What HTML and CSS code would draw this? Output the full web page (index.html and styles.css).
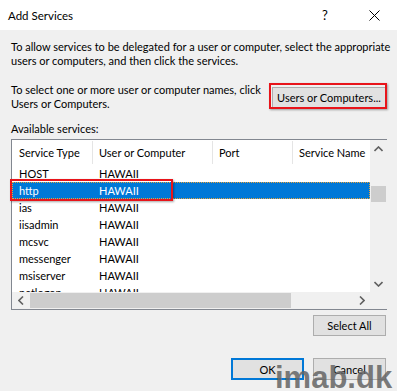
FILE: index.html
```html
<!DOCTYPE html>
<html lang="en">
<head>
<meta charset="UTF-8" />
<meta name="viewport" content="width=device-width, initial-scale=1" />
<title>Add Services</title>
<link rel="stylesheet" href="styles.css">
</head>
<body>

<div class="dialog">
  <div class="titleBar">
    <span class="titleText">Add Services</span>
    <span class="helpBtn">?</span>
    <span class="closeBtn">
      <svg width="11" height="11" viewBox="0 0 11 11"><path d="M0.5 0.5 L10.5 10.5 M10.5 0.5 L0.5 10.5" stroke="#000" stroke-width="1" fill="none"/></svg>
    </span>
  </div>

  <div class="dlgBody">
    <p class="introText">To allow services to be delegated for a user or computer, select the appropriate<br>users or computers, and then click the services.</p>

    <div class="pickRow">
      <p class="pickText">To select one or more user or computer names, click<br>Users or Computers.</p>
      <button class="winBtn usersBtn">Users or Computers...</button>
    </div>

    <div class="listLabel">Available services:</div>

    <div class="listBox">
      <div class="listView">
        <div class="listHead">
          <div class="col first">Service Type</div>
          <div class="col">User or Computer</div>
          <div class="col">Port</div>
          <div class="col">Service Name</div>
        </div>
        <div class="listRow"><div class="col first">HOST</div><div class="col">HAWAII</div><div class="col"></div><div class="col"></div></div>
        <div class="listRow selected"><div class="col first">http</div><div class="col">HAWAII</div><div class="col"></div><div class="col"></div></div>
        <div class="listRow"><div class="col first">ias</div><div class="col">HAWAII</div><div class="col"></div><div class="col"></div></div>
        <div class="listRow"><div class="col first">iisadmin</div><div class="col">HAWAII</div><div class="col"></div><div class="col"></div></div>
        <div class="listRow"><div class="col first">mcsvc</div><div class="col">HAWAII</div><div class="col"></div><div class="col"></div></div>
        <div class="listRow"><div class="col first">messenger</div><div class="col">HAWAII</div><div class="col"></div><div class="col"></div></div>
        <div class="listRow"><div class="col first">msiserver</div><div class="col">HAWAII</div><div class="col"></div><div class="col"></div></div>
        <div class="listRow"><div class="col first">netlogon</div><div class="col">HAWAII</div><div class="col"></div><div class="col"></div></div>
      </div>

      <div class="vScroll">
        <div class="arrowBox">
          <svg width="9" height="6" viewBox="0 0 9 6"><path d="M0.5 5 L4.5 1 L8.5 5" stroke="#606060" stroke-width="1.6" fill="none"/></svg>
        </div>
        <div class="vTrack"><div class="vThumb"></div></div>
        <div class="arrowBox">
          <svg width="9" height="6" viewBox="0 0 9 6"><path d="M0.5 1 L4.5 5 L8.5 1" stroke="#606060" stroke-width="1.6" fill="none"/></svg>
        </div>
      </div>

      <div class="hScroll">
        <div class="arrowBox">
          <svg width="6" height="9" viewBox="0 0 6 9"><path d="M5 0.5 L1 4.5 L5 8.5" stroke="#606060" stroke-width="1.6" fill="none"/></svg>
        </div>
        <div class="hTrack"><div class="hThumb"></div></div>
        <div class="arrowBox">
          <svg width="6" height="9" viewBox="0 0 6 9"><path d="M1 0.5 L5 4.5 L1 8.5" stroke="#606060" stroke-width="1.6" fill="none"/></svg>
        </div>
      </div>

      <div class="scrollCorner"></div>
    </div>

    <div class="selectRow">
      <button class="winBtn">Select All</button>
    </div>

    <div class="footerRow">
      <button class="winBtn defaultBtn">OK</button>
      <button class="winBtn">Cancel</button>
    </div>
  </div>

  <!-- red annotation boxes from the screenshot -->
  <div class="markBox markUsers"></div>
  <div class="markBox markHttp"></div>

  <div class="waterMark">imab.dk</div>
</div>

</body>
</html>
```

FILE: styles.css
```css
html, body {
  margin: 0;
  padding: 0;
  background: #f0f0f0;
}

.dialog {
  position: relative;
  width: 397px;
  height: 391px;
  overflow: hidden;
  background: #f0f0f0;
  font-family: Lato, "Liberation Sans", sans-serif;
  font-size: 11px;
  color: #000;
}

.titleBar {
  height: 30px;
  background: #fff;
  display: flex;
  align-items: center;
  padding-left: 8px;
}

.titleText {
  flex: 1;
  font-size: 11.5px;
}

.helpBtn {
  font-size: 13px;
  width: 12px;
  margin-right: 35px;
}

.closeBtn {
  display: flex;
  width: 11px;
  margin-right: 17px;
}

.dlgBody {
  padding: 10px 10px 0 11px;
  display: flex;
  flex-direction: column;
}

p {
  margin: 0;
  line-height: 14px;
  white-space: nowrap;
}

.pickRow {
  margin-top: 15px;
  height: 28px;
  display: flex;
  align-items: center;
  justify-content: space-between;
}

.listLabel {
  margin-top: 11px;
  line-height: 14px;
}

.winBtn {
  font-family: inherit;
  font-size: 11px;
  color: #000;
  background: #e1e1e1;
  border: 1px solid #adadad;
  height: 22px;
  width: 73px;
  padding: 0;
  margin: 0;
  white-space: nowrap;
}

.usersBtn {
  width: 114px;
  height: 21px;
  margin-right: 1px;
  flex-shrink: 0;
}

.defaultBtn {
  border: 2px solid #0078d7;
}

/* list view */
.listBox {
  margin-top: 3px;
  height: 171px;
  box-sizing: border-box;
  border: 1px solid #828790;
  background: #fff;
  display: grid;
  grid-template-columns: 358px 17px;
  grid-template-rows: 152px 17px;
}

.listView {
  overflow: hidden;
}

.listHead, .listRow {
  display: grid;
  grid-template-columns: 81px 120px 80px 120px;
}

.listHead {
  height: 25px;
  align-items: center;
}

.listHead .col {
  height: 23px;
  line-height: 23px;
  border-right: 1px solid #e5e5e5;
}

.col {
  padding-left: 6px;
  white-space: nowrap;
}

.col.first {
  padding-left: 7px;
}

.listRow {
  height: 17px;
  line-height: 17px;
}

.listRow.selected {
  background: #0078d7;
  color: #fff;
  outline: 1px dotted #e8a33a;
  outline-offset: -1px;
}

.vScroll, .hScroll {
  background: #f0f0f0;
  display: flex;
}

.vScroll {
  flex-direction: column;
}

.arrowBox {
  width: 17px;
  height: 17px;
  display: flex;
  align-items: center;
  justify-content: center;
  flex-shrink: 0;
}

.vTrack, .hTrack {
  flex: 1;
}

.vThumb {
  margin: 29px 1px 0 1px;
  height: 16px;
  background: #cdcdcd;
}

.hTrack {
  display: flex;
  align-items: stretch;
  padding: 1px 0;
}

.hThumb {
  margin-left: 1px;
  width: 261px;
  background: #cdcdcd;
}

.scrollCorner {
  background: #f0f0f0;
}

.selectRow {
  margin-top: 5px;
  display: flex;
  justify-content: flex-end;
  padding-right: 1px;
}

.selectRow .winBtn {
  height: 21px;
}

.footerRow {
  margin-top: 22px;
  display: flex;
  justify-content: flex-end;
  gap: 9px;
  padding-right: 1px;
}

.markBox {
  position: absolute;
  border: 2px solid #e8141a;
  box-shadow: 1px 1px 2px rgba(0, 0, 0, 0.35);
}

.markUsers {
  left: 269px;
  top: 83px;
  width: 114px;
  height: 22px;
}

.markHttp {
  left: 10px;
  top: 179px;
  width: 159px;
  height: 18px;
}

.waterMark {
  position: absolute;
  left: 275px;
  top: 362px;
  font-family: "Liberation Sans", Arial, sans-serif;
  font-weight: bold;
  font-size: 31px;
  line-height: 31px;
  color: rgba(100, 100, 100, 0.85);
}
```
